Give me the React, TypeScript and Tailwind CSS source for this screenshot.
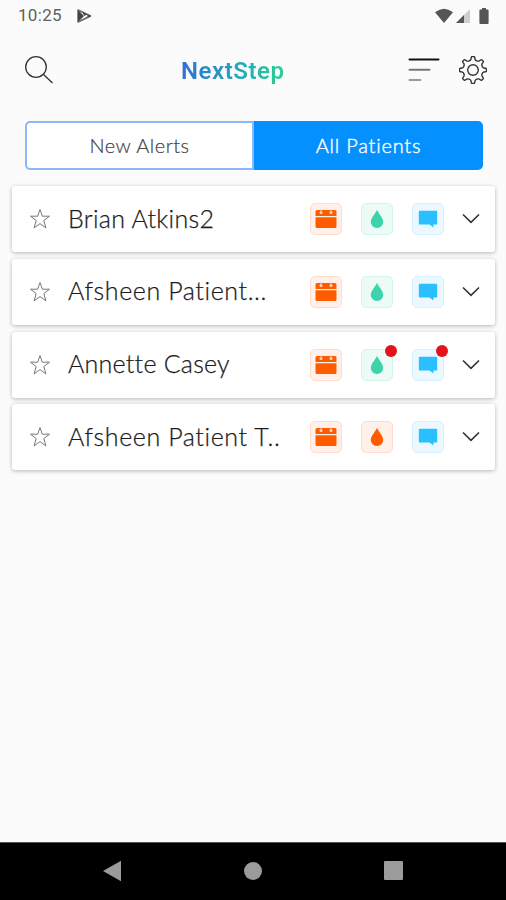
import React, { useState } from 'react';

interface Patient {
    name: string;
    tracking: string;
    dropTone: 'green' | 'orange';
    hasAlert: boolean;
}

const patients: Patient[] = [
    { name: 'Brian Atkins2', tracking: 'tracking-[0.3px]', dropTone: 'green', hasAlert: false },
    { name: 'Afsheen Patient...', tracking: 'tracking-[0.6px]', dropTone: 'green', hasAlert: false },
    { name: 'Annette Casey', tracking: 'tracking-[0.25px]', dropTone: 'green', hasAlert: true },
    { name: 'Afsheen Patient T..', tracking: 'tracking-[0.6px]', dropTone: 'orange', hasAlert: false },
];

// Eight rounded teeth around a 28px box
const gearPath = (() => {
    const pt = (r: number, deg: number) => {
        const a = (deg * Math.PI) / 180;
        return `${(14 + r * Math.cos(a)).toFixed(2)} ${(14 + r * Math.sin(a)).toFixed(2)}`;
    };
    let d = `M${pt(11.2, -10)}`;
    for (let i = 0; i < 8; i++) {
        const c = i * 45;
        d += ` L${pt(12.6, c - 8)} Q${pt(13.5, c - 7)} ${pt(13.5, c - 3)} L${pt(13.5, c + 3)} Q${pt(13.5, c + 7)} ${pt(12.6, c + 8)} L${pt(11.2, c + 10)} C${pt(9.6, c + 15)} ${pt(9.6, c + 30)} ${pt(11.2, c + 35)}`;
    }
    return d + 'Z';
})();

const StatusBar = () => (
    <div className="flex h-[31px] items-center pl-[18px] pr-4 text-[#5f5f5f]">
        <span className="font-[Roboto,sans-serif] text-[17px] leading-none tracking-[0.3px]">10:25</span>
        <svg className="ml-[15px]" width="15" height="14" viewBox="0 0 15 14">
            <path d="M1 1 L13.5 7 L1 13Z" fill="none" stroke="#666" strokeWidth="1.5" strokeLinejoin="round" />
            <path d="M1 1 L7 7 L1 13Z M5 2.8 L10 5.2 L7.5 7Z M10.5 5.2 L14 7 L10.5 8.8Z" fill="#444" />
        </svg>
        <div className="ml-auto flex items-center">
            <svg width="20" height="16" viewBox="0 0 20 16">
                <path d="M1 4.2 Q10 -2.8 19 4.2 L10 15Z" fill="#555" />
            </svg>
            <svg className="ml-[1px]" width="16" height="16" viewBox="0 0 16 16">
                <path d="M15 1 V15 H1Z" fill="#cfcfcf" />
                <path d="M9 7 V15 H1Z" fill="#555" />
            </svg>
            <svg className="ml-[8px] mr-px" width="10" height="16" viewBox="0 0 10 16">
                <path d="M3 0 H7 V1.6 H9 Q9.6 1.6 9.6 2.4 V15 Q9.6 16 8.8 16 H1.2 Q.4 16 .4 15 V2.4 Q.4 1.6 1 1.6 H3Z" fill="#555" />
            </svg>
        </div>
    </div>
);

const Header = () => (
    <header className="flex h-[77px] items-center pl-6 pr-[19px]">
        <button aria-label="Search">
            <svg width="30" height="30" viewBox="0 0 30 30" fill="none" stroke="#333" strokeWidth="1.3">
                <circle cx="12" cy="12" r="10.3" />
                <path d="M19.3 19.3 L28.5 28" />
            </svg>
        </button>
        <h1 className="ml-[127px] mt-[2px] bg-gradient-to-r from-[#2f6fd6] via-[#25a3bd] to-[#2bd092] bg-clip-text font-[Roboto,sans-serif] text-2xl font-semibold tracking-[0.55px] text-transparent">
            NextStep
        </h1>
        <button aria-label="Sort" className="ml-auto">
            <svg width="32" height="26" viewBox="0 0 32 26" strokeWidth="2" strokeLinecap="round">
                <path d="M1.5 2.5 H30.5" stroke="#111" />
                <path d="M1.5 12.8 H21.5" stroke="#777" />
                <path d="M1.5 23 H12.5" stroke="#999" />
            </svg>
        </button>
        <button aria-label="Settings" className="ml-[19px]">
            <svg width="28" height="28" viewBox="0 0 28 28" fill="none" stroke="#333" strokeWidth="1.4" strokeLinejoin="round">
                <path d={gearPath} />
                <circle cx="14" cy="14" r="5.3" />
            </svg>
        </button>
    </header>
);

const Star = () => (
    <svg width="22" height="22" viewBox="0 0 22 22" fill="none" stroke="#777" strokeWidth="1">
        <path d="M11 1.5 L13.3 8.2 H20.5 L14.8 12.5 L16.9 19.9 L11 15.6 L5.1 19.9 L7.2 12.5 L1.5 8.2 H8.7Z" />
    </svg>
);

const CalendarBadge = () => (
    <div className="flex size-8 items-center justify-center rounded-[5px] border border-[#ffdccb] bg-[#fff0e9]">
        <svg width="22" height="20" viewBox="0 0 22 20">
            <path d="M2 1 H20 Q21.5 1 21.5 2.5 V7 H.5 V2.5 Q.5 1 2 1Z" fill="#ff5c00" />
            <path d="M.5 8.3 H21.5 V17.5 Q21.5 19 20 19 H2 Q.5 19 .5 17.5Z" fill="#ff5c00" />
            <circle cx="6" cy="3.6" r="1.5" fill="#ffd9c4" />
            <circle cx="16" cy="3.6" r="1.5" fill="#ffd9c4" />
            <path d="M6 .5 V3 M16 .5 V3" stroke="#ffb48c" strokeWidth="1.4" />
        </svg>
    </div>
);

const AlertDot = () => <span className="absolute -right-[5px] -top-[5px] size-3 rounded-full bg-[#e3121b]" />;

const DropBadge = ({ tone, hasAlert }: { tone: 'green' | 'orange'; hasAlert: boolean }) => (
    <div className={`relative flex size-8 items-center justify-center rounded-[5px] border ${tone === 'green' ? 'border-[#d3f5ea] bg-[#edfbf7]' : 'border-[#ffdccb] bg-[#fff0e9]'}`}>
        <svg width="14" height="20" viewBox="0 0 14 20" fill={tone === 'green' ? '#3dd3ab' : '#ff5c00'}>
            <path d="M7 .8 C8.5 5 13.2 8.6 13.2 12.9 A6.2 6.2 0 0 1 .8 12.9 C.8 8.6 5.5 5 7 .8Z" />
        </svg>
        {hasAlert && <AlertDot />}
    </div>
);

const ChatBadge = ({ hasAlert }: { hasAlert: boolean }) => (
    <div className="relative flex size-8 items-center justify-center rounded-[5px] border border-[#d5f1ff] bg-[#ebf8ff]">
        <svg width="20" height="20" viewBox="0 0 20 20">
            <path d="M2 1.8 H18 Q19.2 1.8 19.2 3 V14.4 Q19.2 15.6 18 15.6 H15.5 V18.6 L11.5 15.6 H2 Q.8 15.6 .8 14.4 V3 Q.8 1.8 2 1.8Z" fill="#2ac0ff" />
        </svg>
        {hasAlert && <AlertDot />}
    </div>
);

const PatientRow = ({ patient }: { patient: Patient }) => (
    <div className="flex h-[66px] items-center rounded-[3px] bg-white pl-[17px] pr-[15px] shadow-[0_1px_4px_rgba(0,0,0,0.28)]">
        <Star />
        <span className={`mb-[2px] ml-[17px] whitespace-nowrap text-[25px] font-light leading-none text-[#1c1c1c] [-webkit-text-stroke:0.25px_#1c1c1c] ${patient.tracking}`}>
            {patient.name}
        </span>
        <div className="ml-auto flex items-center gap-[19px]">
            <CalendarBadge />
            <DropBadge tone={patient.dropTone} hasAlert={patient.hasAlert} />
            <ChatBadge hasAlert={patient.hasAlert} />
            <svg className="-ml-px" width="18" height="12" viewBox="0 0 18 12" fill="none" stroke="#333" strokeWidth="1.6">
                <path d="M1 1.5 L9 9.3 L17 1.5" />
            </svg>
        </div>
    </div>
);

const NavBar = () => (
    <nav className="flex h-[58px] items-center justify-between border-t border-[#555] bg-black pb-[2px] pl-[102px] pr-[103px]">
        <svg width="20" height="22" viewBox="0 0 20 22">
            <path d="M1 11 L19 .8 V21.2Z" fill="#9b9b9b" />
        </svg>
        <span className="size-[18px] rounded-full bg-[#9b9b9b]" />
        <span className="size-[19px] rounded-[1px] bg-[#9b9b9b]" />
    </nav>
);

const App: React.FC = () => {
    const [activeTab, setActiveTab] = useState<'alerts' | 'patients'>('patients');

    const tabStyle = (tab: 'alerts' | 'patients') =>
        activeTab === tab
            ? 'bg-[#0590ff] text-white border-[#0590ff] [-webkit-text-stroke:0.4px_white]'
            : 'bg-white text-[#444] border-[#8bb8fa] [-webkit-text-stroke:0.2px_#444]';

    return (
        <div className="flex h-[900px] w-[506px] flex-col bg-[#fbfbfb] font-[Lato,sans-serif]">
            <StatusBar />
            <Header />
            <div className="mx-[25px] mt-[13px] flex h-[49px] w-[458px] text-[20px] font-light">
                <button onClick={() => setActiveTab('alerts')} className={`w-[229px] rounded-l-[5px] border-2 pb-[2px] tracking-[0.5px] ${tabStyle('alerts')}`}>
                    New Alerts
                </button>
                <button onClick={() => setActiveTab('patients')} className={`w-[229px] rounded-r-[5px] border-2 pb-[2px] tracking-[0.8px] ${tabStyle('patients')}`}>
                    All Patients
                </button>
            </div>
            <main className="ml-3 mr-[11px] mt-4 flex flex-1 flex-col gap-[6.8px]">
                {patients.map((patient) => (
                    <PatientRow key={patient.name} patient={patient} />
                ))}
            </main>
            <NavBar />
        </div>
    );
};

export default App;
